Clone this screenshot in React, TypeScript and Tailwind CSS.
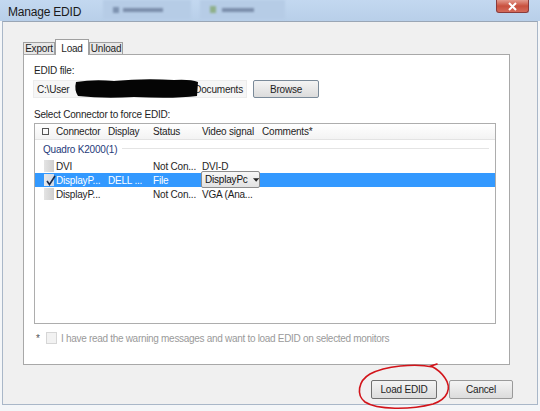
import React from "react";

const font = { fontFamily: '"Liberation Sans", Arial, sans-serif' };

function RowCheck({ checked }: { checked?: boolean }) {
  return (
    <div className="w-[21px] flex items-center justify-start pl-[9px]">
      <div
        className={
          "w-[10px] h-[12px] relative " +
          (checked ? "bg-gradient-to-r from-[#e8e8e8] to-[#cfd8e6]" : "bg-gradient-to-r from-[#e4e4e4] to-[#cfcfcf]")
        }
      >
        {checked && (
          <svg className="absolute left-[2px] top-[1px]" width="10" height="11" viewBox="0 0 10 11">
            <path d="M1 6 L3.5 9.5 L9 1" stroke="#1b2a4a" strokeWidth="1.6" fill="none" />
          </svg>
        )}
      </div>
    </div>
  );
}

export default function App() {
  return (
    <div
      className="w-[540px] h-[411px] relative overflow-hidden bg-[#f4f6f8] text-[10px] tracking-[-0.2px] text-[#1e1e1e]"
      style={font}
    >
      {/* title bar */}
      <div className="h-[21px] flex items-start bg-gradient-to-b from-[#c3d8f0] to-[#b8cfe9] relative">
        <div className="pl-[8px] pt-[3px] text-[12px] tracking-[-0.2px] text-[#1a1a1a]">Manage EDID</div>
        <div className="ml-[22px] w-[88px] h-[19px] bg-[#b6cce6] flex items-center pl-[10px] gap-[4px] blur-[1px]">
          <div className="w-[6px] h-[6px] bg-[#7d92b0]" />
          <div className="w-[40px] h-[4px] bg-[#7a8daa]" />
        </div>
        <div className="ml-[9px] w-[85px] h-[19px] bg-[#b6cce6] flex items-center pl-[10px] gap-[6px] blur-[1px]">
          <div className="w-[6px] h-[7px] bg-[#8fb08a]" />
          <div className="w-[32px] h-[4px] bg-[#7a8daa]" />
        </div>
        <div className="absolute left-[496px] top-0 w-[33px] h-[13px] rounded-b-[3px] border border-t-0 border-[#8a3b3b] bg-gradient-to-b from-[#e29a8e] via-[#c8503e] to-[#d46a5a] flex items-center justify-center">
          <svg width="11" height="9" viewBox="0 0 11 9">
            <path d="M2 1 L9 8 M9 1 L2 8" stroke="white" strokeWidth="2" />
          </svg>
        </div>
      </div>

      {/* window body */}
      <div className="ml-[2px] w-[536px] h-[384px] bg-[#f0f0f0] border border-[#a9b7c8] border-t-[#9aa6b5] flex flex-col pl-[20px] pr-[27px]">
        {/* tabs */}
        <div className="mt-[16px] h-[16px] flex items-end">
          <div className="w-[32px] h-[12px] border border-b-0 border-[#a0a0a0] bg-[#e8e8e8] flex items-center justify-center">Export</div>
          <div className="w-[34px] h-[16px] border border-b-0 border-[#a0a0a0] bg-white flex items-start justify-center pt-[1px] relative top-[1px] z-10">Load</div>
          <div className="w-[34px] h-[12px] border border-b-0 border-[#a0a0a0] bg-[#e8e8e8] flex items-center justify-center">Unload</div>
        </div>
        {/* panel */}
        <div className="w-[487px] h-[311px] border border-[#a8a8a8] bg-white flex flex-col pl-[10px] pr-[13px]">
          <div className="mt-[10px] h-[12px] leading-[12px]">EDID file:</div>
          <div className="mt-[2px] h-[20px] flex items-center">
            <div className="w-[214px] h-[18px] bg-[#f6f6f6] border border-[#ececec] flex items-center justify-between px-[3px] relative -ml-[1px]">
              <span>C:\User</span>
              <span>Documents</span>
              <svg className="absolute left-[40px] top-[-3px]" width="126" height="22" viewBox="0 0 126 22">
                <path d="M2 4 Q20 1 40 3 Q70 0 100 2 Q116 1 124 4 L123 18 Q100 21 60 19 Q30 21 4 18 Q0 12 2 4 Z" fill="#050505" />
              </svg>
            </div>
            <div className="ml-[6px] w-[66px] h-[18px] rounded-[2px] border border-[#7a8a99] bg-gradient-to-b from-[#f4f4f4] to-[#dcdcdc] flex items-center justify-center">Browse</div>
          </div>
          <div className="mt-[10px] h-[12px] leading-[12px]">Select Connector to force EDID:</div>
          {/* list */}
          <div className="mt-[2px] w-[462px] h-[201px] border border-[#adadad] bg-white flex flex-col">
            <div className="h-[16px] flex items-center bg-gradient-to-b from-white to-[#f3f3f3] border-b border-[#e3e3e3]">
              <div className="w-[21px] pl-[7px] flex items-center">
                <div className="w-[7px] h-[7px] border border-[#555]" />
              </div>
              <div className="w-[52px]">Connector</div>
              <div className="w-[45px]">Display</div>
              <div className="w-[49px]">Status</div>
              <div className="w-[60px]">Video signal</div>
              <div>Comments*</div>
            </div>
            <div className="h-[19px] flex items-center pl-[8px] text-[#1f3b7a]">
              <span>Quadro K2000(1)</span>
              <div className="ml-[5px] mt-[-2px] flex-1 h-px bg-[#e4e4e4] mr-[6px]" />
            </div>
            <div className="h-[14px] flex items-center">
              <RowCheck />
              <div className="w-[97px]">DVI</div>
              <div className="w-[49px]">Not Con...</div>
              <div>DVI-D</div>
            </div>
            <div className="h-[14px] flex items-center bg-[#3399ff] text-white relative">
              <RowCheck checked />
              <div className="w-[52px]">DisplayP...</div>
              <div className="w-[45px]">DELL ...</div>
              <div className="w-[49px]">File</div>
              <div className="absolute left-[166px] top-[-2px] w-[59px] h-[17px] border border-[#8d8d8d] rounded-[2px] bg-gradient-to-b from-[#f7f7f7] to-[#e2e2e2] text-[#111] flex items-center pl-[3px] gap-[5px]">
                <span>DisplayPc</span>
                <svg width="7" height="4" viewBox="0 0 7 4">
                  <path d="M0 0 L7 0 L3.5 4 Z" fill="#222" />
                </svg>
              </div>
            </div>
            <div className="h-[14px] flex items-center">
              <RowCheck />
              <div className="w-[97px]">DisplayP...</div>
              <div className="w-[49px]">Not Con...</div>
              <div>VGA (Ana...</div>
            </div>
          </div>
          <div className="mt-[7px] h-[14px] flex items-center text-[#9a9a9a] tracking-[-0.3px]">
            <span className="w-[12px] text-[#555] pl-[2px]">*</span>
            <div className="w-[11px] h-[12px] border border-[#d6d6d6] bg-[#f2f2f2]" />
            <span className="ml-[4px]">I have read the warning messages and want to load EDID on selected monitors</span>
          </div>
        </div>
        {/* buttons */}
        <div className="mt-[15px] flex justify-end gap-[12px]">
          <div className="w-[66px] h-[19px] rounded-[2px] border border-[#707070] bg-gradient-to-b from-[#f4f4f4] to-[#dcdcdc] flex items-center justify-center">Load EDID</div>
          <div className="w-[64px] h-[19px] rounded-[2px] border border-[#9a9a9a] bg-gradient-to-b from-[#f4f4f4] to-[#dcdcdc] flex items-center justify-center -mr-[3px]">Cancel</div>
        </div>
      </div>

      {/* red hand-drawn circle */}
      <svg className="absolute left-[355px] top-[360px]" width="100" height="51" viewBox="0 0 100 51">
        <path
          d="M78 7 C60 3 30 6 15 14 C3 21 1 35 10 42 C22 50 55 50 78 44 C93 39 97 28 90 18 C86 12 82 9 76 6 L82 4"
          stroke="#d2141a"
          strokeWidth="1.6"
          fill="none"
          strokeLinecap="round"
        />
      </svg>
    </div>
  );
}
